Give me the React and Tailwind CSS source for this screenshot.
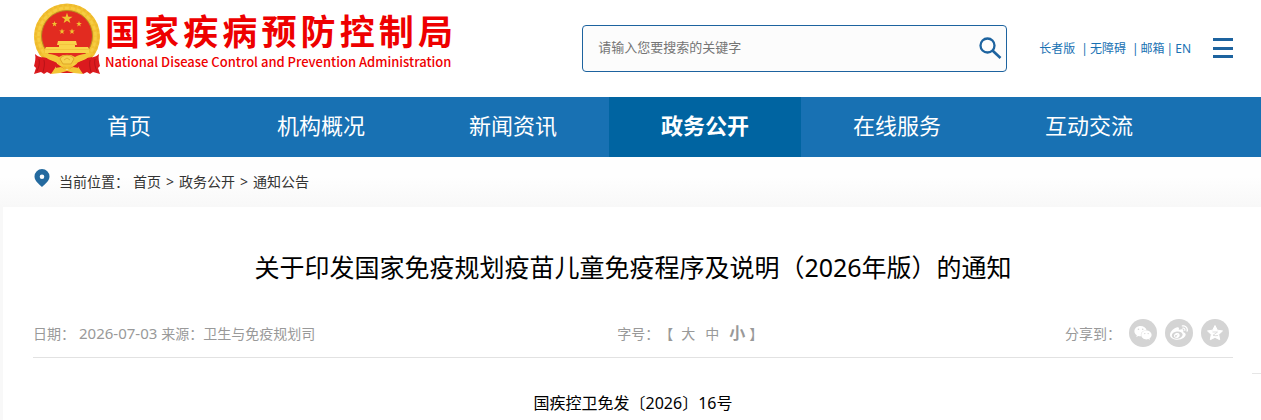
import { FaWeibo, FaWeixin } from "react-icons/fa";

const SITE_NAME = "国家疾病预防控制局";

const NAV_ITEMS = [
  { label: "首页" },
  { label: "机构概况" },
  { label: "新闻资讯" },
  { label: "政务公开", active: true },
  { label: "在线服务" },
  { label: "互动交流" },
];

const SHARE_LINKS = [
  { label: "微信", Icon: FaWeixin },
  { label: "微博", Icon: FaWeibo },
  { label: "QQ空间", Icon: QzoneIcon },
];

const STAR = "M0-5 1.2-1.6 4.8-1.5 1.9.6 2.9 4 0 2-2.9 4-1.9.6-4.8-1.5-1.2-1.6Z";

function Emblem() {
  return (
    <svg viewBox="0 0 68 72" className="w-[68px] h-[72px] flex-shrink-0" aria-hidden="true">
      {/* Wheat wreath */}
      <circle cx="34" cy="33.5" r="33" fill="#f3c232" />
      <circle cx="34" cy="33.5" r="31.500" fill="none" stroke="#edb92d" strokeWidth="2" strokeDasharray="3 2" />
      <circle cx="34" cy="33.5" r="28.500" fill="none" stroke="#f6cd43" strokeWidth="2.500" strokeDasharray="4 2" />
      <circle cx="34" cy="33" r="25.500" fill="#e22b20" stroke="#b98a22" />
      {/* Stars */}
      <g fill="#f0c231">
        <path d={STAR} transform="translate(34 15.500) scale(1.150)" />
        <path d={STAR} transform="translate(21.500 21) scale(.6)" />
        <path d={STAR} transform="translate(46 21) scale(.6)" />
        <path d={STAR} transform="translate(29 28.500) scale(.6)" />
        <path d={STAR} transform="translate(39 28.500) scale(.6)" />
      </g>
      {/* Gate */}
      <path d="M25 38h18l1 4h-2v2h13l1 2v4H12v-4l1-2h13v-2h-2z" fill="#f9d34a" />
      <path d="M26 41.500h16M12 46.500h44" stroke="#f3c33d" />
      {/* Red drapery on both sides */}
      <path d="M2 51c4 4 8 3 13 4l9 5-3 9-3 2-4-2-3 2-3-2-7 2 2-6-2-2c1-4 2-8 1-12z" fill="#db1a1e" />
      <path d="M66 51c-4 4-8 3-13 4l-9 5 3 9 3 2 4-2 3 2 3-2 7 2-2-6 2-2c-1-4-2-8-1-12z" fill="#db1a1e" />
      <path d="M6 56c1 4 0 8-2 12M11 57c1 4 0 8-1 12M62 56c-1 4 0 8 2 12M57 57c-1 4 0 8 1 12" fill="none" stroke="#b81318" />
      <path d="M23 60l11 8 11-8v8l-6 2H29l-6-2z" fill="#db1a1e" />
      {/* Crossed stalks and cog */}
      <path d="M9 50c7 1 12 1 17 4l4-2h8l4 2c5-3 10-3 17-4-5 7-10 8-16 9l-6 4h-6l-6-4c-6-1-11-2-16-9z" fill="#f4c838" />
      <path d="M27 56c2-5 12-5 14 0l-3 5h-8z" fill="#f7d24d" stroke="#dfa62a" />
      <path d="M31 57l3-2 3 2" fill="none" stroke="#e3ae2e" />
      <path d="M18 71l4-6 6-1 6 3 6-3 6 1 4 6-9-1-7-2-7 2z" fill="#f3c636" />
    </svg>
  );
}

function SearchIcon() {
  return (
    <svg viewBox="0 0 24 24" className="w-6 h-6" fill="none" stroke="#1d639f" aria-hidden="true">
      <circle cx="9.500" cy="8.500" r="7" strokeWidth="2.300" />
      <path d="M14.500 13.500l8 7.500" strokeWidth="2.600" />
    </svg>
  );
}

function PinIcon() {
  return (
    <svg viewBox="0 0 16 18" className="w-4 h-[18px]" aria-hidden="true">
      <path
        fill="#246a9f"
        fillRule="evenodd"
        d="M8 0a7.500 7.500 0 0 1 7.500 7.500C15.500 12 10.500 15.500 8 18 5.500 15.500.5 12 .5 7.500A7.500 7.500 0 0 1 8 0Zm0 5.500a2.300 2.300 0 1 0 0 4.600 2.300 2.300 0 0 0 0-4.600Z"
      />
    </svg>
  );
}

function QzoneIcon({ className }) {
  return (
    <svg viewBox="0 0 18 18" className={className} aria-hidden="true">
      <path
        d="M9 1.500l2.300 4.700 5.200.7-3.800 3.600 1 5.200L9 13.300l-4.700 2.400 1-5.200L1.500 6.900l5.200-.7z"
        fill="currentColor"
        stroke="currentColor"
        strokeLinejoin="round"
      />
      <path d="M6.500 8h5l-4.500 3.300c1.500.5 3 .5 5 .2" fill="none" stroke="#d4d4d4" strokeWidth=".8" />
    </svg>
  );
}

function Header() {
  return (
    <header className="flex items-start h-[97px] pl-[33px] pr-7">
      <a href="#" className="flex items-start gap-1 pt-[3px] text-[#ee0000]">
        <Emblem />
        <div className="w-[348px] pt-[7px] font-['Noto_Sans_CJK_SC',sans-serif]">
          <div className="flex justify-between text-[35px] leading-10 font-bold">
            {[...SITE_NAME].map((char) => (
              <span key={char}>{char}</span>
            ))}
          </div>
          <p className="pt-[2px] text-[13px] leading-5 font-medium whitespace-nowrap">
            National Disease Control and Prevention Administration
          </p>
        </div>
      </a>

      <form className="flex items-center w-[425px] h-[47px] mt-[25px] ml-auto pl-[15px] pr-1 rounded-[4px] border border-[#1d639f] bg-[#fcfcfc]">
        <input
          type="text"
          aria-label="搜索"
          placeholder="请输入您要搜索的关键字"
          className="flex-1 min-w-0 pb-[2px] text-[13px] outline-none placeholder:text-[#757575]"
        />
        <button type="button" aria-label="搜索" className="flex-shrink-0">
          <SearchIcon />
        </button>
      </form>

      <div className="flex items-center h-5 mt-[39px] ml-8 text-[12px] text-[#1871b3] whitespace-nowrap">
        <a href="#">长者版</a>
        <span className="ml-[6px] mr-[2px]">|</span>
        <a href="#">无障碍</a>
        <span className="ml-[6px] mr-[2px]">|</span>
        <a href="#">邮箱</a>
        <span className="mx-[2px]">|</span>
        <a href="#">EN</a>
      </div>

      <button type="button" aria-label="菜单" className="flex flex-col justify-between w-5 h-5 mt-[38px] ml-[22px]">
        <span className="w-full h-[3px] bg-[#1d639f]"></span>
        <span className="w-full h-[3px] bg-[#1d639f]"></span>
        <span className="w-full h-[3px] bg-[#1d639f]"></span>
      </button>
    </header>
  );
}

function MainNav() {
  return (
    <nav className="bg-[#1871b3] px-[33px]">
      <ul className="flex">
        {NAV_ITEMS.map(({ label, active }) => (
          <li key={label} className="w-[192px]">
            <a
              href="#"
              className={`block pb-1 text-center text-[22px] leading-[56px] text-white ${active ? "bg-[#0064a1] font-bold" : ""}`}
            >
              {label}
            </a>
          </li>
        ))}
      </ul>
    </nav>
  );
}

function Breadcrumb() {
  return (
    <div className="flex items-start h-[50px] px-[34px] pt-3 bg-gradient-to-b from-[#fefefe] from-40% to-[#f8f8f8] text-[14px] leading-[26px] text-[#333333]">
      <PinIcon />
      <span className="ml-[9px]">当前位置：</span>
      <div className="flex gap-[5px] ml-1">
        <a href="#">首页</a>
        <span>&gt;</span>
        <a href="#">政务公开</a>
        <span>&gt;</span>
        <a href="#">通知公告</a>
      </div>
    </div>
  );
}

function ArticleMeta() {
  return (
    <div className="flex items-center justify-between h-[49px] border-b border-[#e2e2e2] text-[14px] text-[#999999]">
      <div className="flex items-baseline gap-1">
        <span>日期：</span>
        <span className="text-[15px]">2026-07-03</span>
        <span>来源：卫生与免疫规划司</span>
      </div>
      <div className="flex items-baseline">
        <span>字号：</span>
        <span>【</span>
        <button type="button" className="ml-2">大</button>
        <button type="button" className="ml-[10px]">中</button>
        <button type="button" className="ml-[10px] text-[16px] font-bold">小</button>
        <span className="ml-1">】</span>
      </div>
      <div className="flex items-center gap-2 pr-1">
        <span>分享到：</span>
        {SHARE_LINKS.map(({ label, Icon }) => (
          <a
            key={label}
            href="#"
            aria-label={label}
            className="flex items-center justify-center w-7 h-7 rounded-full bg-[#d4d4d4] text-white"
          >
            <Icon className="w-[18px] h-[18px]" />
          </a>
        ))}
      </div>
    </div>
  );
}

export default function App() {
  return (
    <div className="bg-white font-['Noto_Sans','Noto_Sans_CJK_SC',sans-serif]">
      <Header />
      <MainNav />
      <Breadcrumb />
      <main className="relative border-l-[3px] border-[#f8f8f8] pl-[30px] pr-7 pt-10 pb-[2px]">
        <h1 className="text-center text-[25px] leading-10 text-black">
          关于印发国家免疫规划疫苗儿童免疫程序及说明（2026年版）的通知
        </h1>
        <div className="mt-[22px]">
          <ArticleMeta />
        </div>
        <p className="pt-[30px] text-center text-[16px] leading-[30px] text-black">国疾控卫免发〔2026〕16号</p>
        {/* Edge of the floating side panel */}
        <div className="absolute right-0 top-[166px] w-[9px] border-t border-[#e6e6e6]"></div>
      </main>
    </div>
  );
}
